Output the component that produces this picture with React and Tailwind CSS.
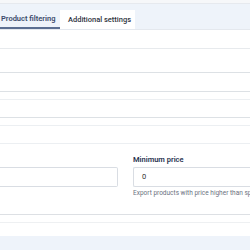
const App = () => {
  return (
    <div className="w-[250px] h-[250px] overflow-hidden bg-white font-['Roboto',sans-serif]">
      <div className="h-[3px] bg-[#f6f7f9]" />
      <div className="h-[26px] bg-[#eef3fa] border-t border-[#e6e9ee] flex items-end">
        <div className="h-[19px] w-[60px] flex items-center pl-[1px] border-b-2 border-[#5b6e91] text-[7.5px] font-semibold text-[#3b4a6a] whitespace-nowrap">
          Product filtering
        </div>
        <div className="h-[19px] w-[75px] bg-white flex items-center pl-[8px] text-[7.5px] font-medium text-[#2f3340] whitespace-nowrap">
          Additional settings
        </div>
      </div>
      <div className="h-[19px] border-t border-[#e4e8ee]" />
      <div className="h-[24px] border-t border-[#e7eaed]" />
      <div className="h-[19px] border-t border-[#dde1e5]" />
      <div className="h-[8px] border-t border-[#dde1e5]" />
      <div className="h-[18px] border-t border-[#eceff2]" />
      <div className="h-[8px] border-t border-[#dde1e5]" />
      <div className="h-[18px] border-t border-[#eceff2]" />
      <div className="h-[71px] border-t border-[#eceff2] flex gap-[15px]">
        <div className="w-[118px] pt-[23px]">
          <div className="h-[20px] border border-l-0 border-[#d9dde3] rounded-r-[2px]" />
        </div>
        <div className="flex-1 pt-[11px] min-w-0">
          <div className="text-[7.5px] font-semibold text-[#27324f] leading-[10px] whitespace-nowrap">Minimum price</div>
          <div className="mt-[2px] h-[20px] border border-r-0 border-[#d9dde3] rounded-l-[2px] flex items-center pl-[8px] text-[7.5px] text-[#333]">
            0
          </div>
          <div className="mt-[2px] text-[6.5px] leading-[9px] text-[#6b7280] whitespace-nowrap">
            Export products with price higher than specified
          </div>
        </div>
      </div>
      <div className="h-[8px] border-t border-[#dde0e4]" />
      <div className="h-[14px] border-t border-[#eef0f2]" />
      <div className="h-[20px] bg-[#eef3fa]" />
    </div>
  );
};

export default App;
